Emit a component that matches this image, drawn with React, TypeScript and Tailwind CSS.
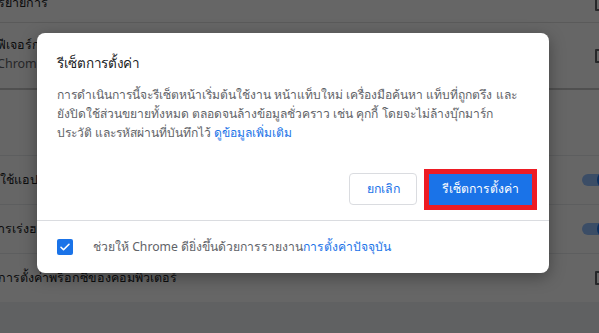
import React from "react";

const font = { fontFamily: '"Noto Sans", Roboto, "Liberation Sans", sans-serif' };

function ExtIcon() {
  return <div className="w-[14px] h-[14px] border-2 border-[#5f6368] rounded-[1px] -mr-[10px] shrink-0" />;
}

function Toggle() {
  return (
    <div className="relative w-[34px] h-[12px] -mr-[17px] shrink-0">
      <div className="absolute inset-0 rounded-full bg-[#94c0ff]" />
      <div className="absolute left-[15px] top-[-3px] w-[18px] h-[18px] rounded-full bg-[#1a73e8]" />
    </div>
  );
}

export default function App() {
  return (
    <div className="relative w-[599px] h-[333px] overflow-hidden bg-[#f1f3f4]" style={font}>
      {/* settings page underneath */}
      <div className="bg-white text-[12.5px] text-[#202124]">
        <div className="-mt-[15px] h-[38px] flex items-center justify-between border-b border-[#e0e0e0]">
          <span className="-ml-[2px] whitespace-nowrap">รยายการ</span>
          <ExtIcon />
        </div>
        <div className="h-[65px] flex items-center justify-between">
          <div className="-ml-[3px] flex flex-col leading-[19px] mt-[-4px]">
            <span className="whitespace-nowrap">ฟีเจอร์การช่วยเหลือพิเศษ</span>
            <span className="whitespace-nowrap text-[#5f6368]">Chrome เว็บสโตร์</span>
          </div>
          <ExtIcon />
        </div>
        <div className="h-[67px] border-t-2 border-[#c8c8c8]" />
        <div className="h-[49px] flex items-center justify-between border-t border-[#e8eaed]">
          <span className="whitespace-nowrap">ใช้แอปพลิเคชันพื้นหลัง</span>
          <Toggle />
        </div>
        <div className="h-[49px] flex items-center justify-between border-t border-[#e8eaed]">
          <span className="-ml-[2px] whitespace-nowrap">ารเร่งฮาร์ดแวร์</span>
          <Toggle />
        </div>
        <div className="h-[49px] flex items-center justify-between border-t border-[#e8eaed]">
          <span className="-ml-[2px] whitespace-nowrap">การตั้งค่าพร็อกซีของคอมพิวเตอร์</span>
          <ExtIcon />
        </div>
      </div>

      {/* scrim */}
      <div className="absolute inset-0 bg-black/60" />

      {/* dialog */}
      <div className="absolute left-[37px] top-[33px] w-[512px] h-[240px] bg-white rounded-[8px] shadow-[0_4px_16px_rgba(0,0,0,0.35)] flex flex-col">
        <div className="px-5 pt-[20px] text-[13.5px] leading-[20px] text-[#202124] tracking-[-0.3px]">รีเซ็ตการตั้งค่า</div>
        <div className="px-5 pt-[12px] text-[12.1px] leading-[19px] text-[#5f6368] whitespace-nowrap">
          การดำเนินการนี้จะรีเซ็ตหน้าเริ่มต้นใช้งาน หน้าแท็บใหม่ เครื่องมือค้นหา แท็บที่ถูกตรึง และ
          <br />
          ยังปิดใช้ส่วนขยายทั้งหมด ตลอดจนล้างข้อมูลชั่วคราว เช่น คุกกี้ โดยจะไม่ล้างบุ๊กมาร์ก
          <br />
          ประวัติ และรหัสผ่านที่บันทึกไว้ <span className="text-[#1a73e8]">ดูข้อมูลเพิ่มเติม</span>
        </div>
        <div className="flex-1 flex items-end justify-end pr-[12px] pb-[10px] gap-[7px]">
          <button className="mb-[5px] h-[32px] w-[68px] rounded-[4px] border border-[#dadce0] bg-white text-[12.3px] font-medium text-[#1a73e8]">
            ยกเลิก
          </button>
          <div className="border-[5px] border-[#ed1c24]">
            <button className="block h-[31px] w-[103px] bg-[#1a73e8] text-[12.2px] font-medium text-white">
              รีเซ็ตการตั้งค่า
            </button>
          </div>
        </div>
        <div className="h-[53px] border-t border-[#dadce0] flex items-center px-5">
          <div className="w-[16px] h-[16px] rounded-[2px] bg-[#1a73e8] flex items-center justify-center shrink-0">
            <svg width="12" height="12" viewBox="0 0 24 24" fill="none">
              <path d="M4 12.5l5 5L20 6.5" stroke="white" strokeWidth="3.2" strokeLinecap="round" strokeLinejoin="round" />
            </svg>
          </div>
          <span className="ml-[20px] text-[12.2px] text-[#5f6368] whitespace-nowrap">
            ช่วยให้ Chrome ดียิ่งขึ้นด้วยการรายงาน<span className="text-[#1a73e8]">การตั้งค่าปัจจุบัน</span>
          </span>
        </div>
      </div>
    </div>
  );
}
